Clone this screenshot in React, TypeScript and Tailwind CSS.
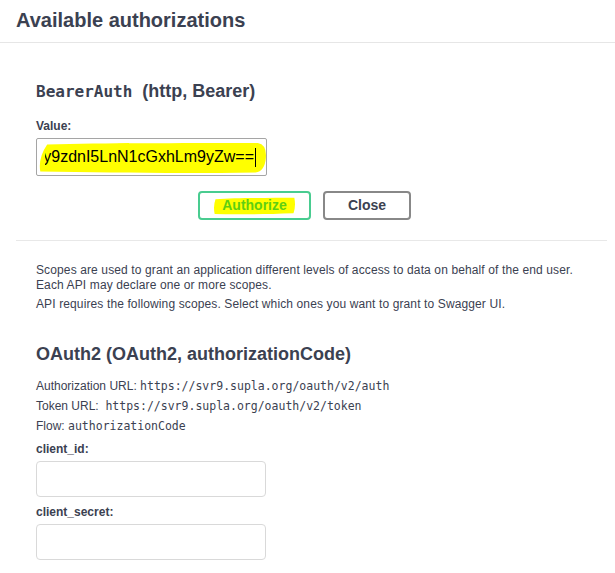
import React from "react";

const sans = { fontFamily: '"Liberation Sans", Arial, sans-serif' };
const mono = { fontFamily: '"DejaVu Sans Mono", "Liberation Mono", monospace' };

function Marker({ className, d }: { className: string; d: string }) {
  return (
    <svg className={className} viewBox="0 0 100 100" preserveAspectRatio="none" aria-hidden>
      <path d={d} fill="#ffff00" />
    </svg>
  );
}

function BearerSection() {
  return (
    <div className="px-5 pt-[37px] pb-[20px]">
      <h4 className="text-[18px] leading-[22px] font-bold text-[#3b4151]">
        <code className="text-[16px] font-bold" style={mono}>BearerAuth</code>
        <span>&nbsp; (http, Bearer)</span>
      </h4>
      <div className="mt-[16px]">
        <label className="block text-[12px] leading-[14px] font-bold text-[#3b4151]">Value:</label>
        <div className="relative mt-[5px] w-[231px] h-[38px] border border-[#a5a5a5] rounded-[2px] bg-white flex items-center pl-[8px] pr-[10px]">
          <Marker
            className="absolute left-[1px] top-[3px] w-[229px] h-[32px]"
            d="M4 8 C 30 2, 60 4, 96 3 Q 100 8 99.5 50 Q 99 92 95 95 C 60 99, 30 95, 1 92 Q 0 50 4 8 Z"
          />
          <div className="relative flex-1 overflow-hidden flex justify-end items-center">
            <span className="whitespace-nowrap text-[16px] leading-[20px] text-black" style={sans}>
              Ly9zdnI5LnN1cGxhLm9yZw==
            </span>
            <span className="shrink-0 w-px h-[19px] bg-black ml-[1px]" />
          </div>
        </div>
      </div>
      <div className="flex gap-[12px] pl-[162px] mt-[15px]">
        <button
          className="relative w-[113px] h-[29px] border-2 border-[#49cc90] rounded-[4px] bg-white text-[14px] font-bold text-[#5fcf12] flex items-center justify-center"
          style={sans}
        >
          <Marker
            className="absolute left-[13px] top-[4px] w-[83px] h-[18px]"
            d="M3 12 C 30 2, 70 6, 98 4 Q 100 50 97 90 C 60 96, 30 98, 2 95 Q 0 50 3 12 Z"
          />
          <span className="relative">Authorize</span>
        </button>
        <button
          className="w-[88px] h-[29px] border-2 border-[#888888] rounded-[4px] bg-white text-[14px] font-bold text-[#3b4151] flex items-center justify-center"
          style={sans}
        >
          Close
        </button>
      </div>
    </div>
  );
}

function Field({ label }: { label: string }) {
  return (
    <div>
      <label className="block text-[12px] leading-[16px] font-bold text-[#3b4151]">{label}</label>
      <div className="mt-[4px] w-[230px] h-[36px] border border-[#d9d9d9] rounded-[4px] bg-white" />
    </div>
  );
}

function OAuthSection() {
  return (
    <div className="px-5 pt-[22px]">
      <div className="text-[12px] leading-[15px] tracking-[0.12px] text-[#3b4151]">
        <p>
          Scopes are used to grant an application different levels of access to data on behalf of the end user.
          <br />
          Each API may declare one or more scopes.
        </p>
        <p className="mt-[4px]">API requires the following scopes. Select which ones you want to grant to Swagger UI.</p>
      </div>
      <h4 className="mt-[31px] text-[18px] leading-[22px] font-bold text-[#3b4151]">
        OAuth2 (OAuth2, authorizationCode)
      </h4>
      <div className="mt-[11px] text-[12px] leading-[20px] text-[#3b4151]">
        <p>
          Authorization URL: <code className="text-[11.5px]" style={mono}>https://svr9.supla.org/oauth/v2/auth</code>
        </p>
        <p>
          Token URL:&nbsp; <code className="text-[11.5px]" style={mono}>https://svr9.supla.org/oauth/v2/token</code>
        </p>
        <p>
          Flow: <code className="text-[11.5px]" style={mono}>authorizationCode</code>
        </p>
      </div>
      <div className="mt-[5px] flex flex-col gap-[7px]">
        <Field label="client_id:" />
        <Field label="client_secret:" />
      </div>
    </div>
  );
}

export default function App() {
  return (
    <div className="w-[615px] h-[573px] overflow-hidden bg-white text-[#3b4151]" style={sans}>
      <div className="h-[43px] border-b border-[#e6e6e6] px-4 flex items-center">
        <h3 className="text-[20px] leading-[24px] font-bold text-[#3b4151] -mt-[3px]">
          Available authorizations
        </h3>
      </div>
      <div className="pl-4 pr-2">
        <div className="border-b border-[#e8e8e8]">
          <BearerSection />
        </div>
        <OAuthSection />
      </div>
    </div>
  );
}
